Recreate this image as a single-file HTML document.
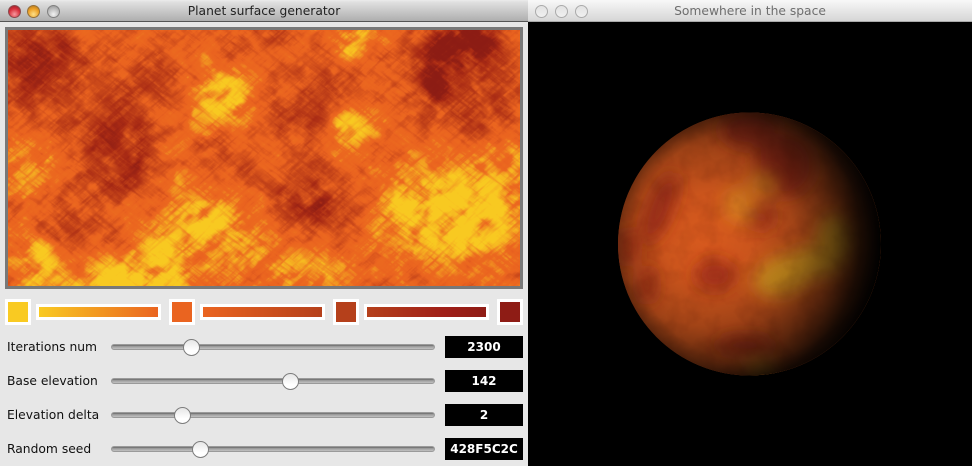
<!DOCTYPE html>
<html><head><meta charset="utf-8">
<style>
html,body{margin:0;padding:0;background:#000;width:972px;height:466px;overflow:hidden}
#root{position:relative;width:972px;height:466px;overflow:hidden;font-family:"DejaVu Sans","Liberation Sans",sans-serif}
#root div{position:absolute;box-sizing:border-box}
svg{display:block}
.tb{top:0;height:22px;text-align:center;font-size:12.3px;line-height:22px}
.l{left:0;width:528px;background:linear-gradient(#ececec,#e0e0e0 10%,#aeaeae);border-bottom:1px solid #555;color:#222}
.r{left:528px;width:444px;background:linear-gradient(#f8f8f8,#d6d6d6);border-bottom:1px solid #aaa;color:#6e6e6e}
.dot{width:13px;height:13px;border-radius:50%;top:5px}
.o{border:1px solid #aaa;background:linear-gradient(#e2e2e2,#f0f0f0)}
.sw{width:26px;height:26px;top:299px;border:3px solid #fff}
.bar{width:125px;height:16px;top:304px;border:3px solid #fff}
.lb{left:7px;font-size:12.3px;line-height:16px;color:#111;white-space:nowrap}
.tr{left:111px;width:324px;height:6px;border-radius:3px;background:linear-gradient(#666,#a0a0a0 40%,#c0c0c0);border:1px solid #9a9a9a}
.th{width:17px;height:17px;border-radius:50%;background:linear-gradient(#e6e6e6,#fff 70%);border:1.5px solid #7c7c7c}
.v{left:445px;width:78px;height:22px;background:#000;color:#fff;text-align:center;font-size:12px;font-weight:bold;line-height:22px}
</style></head><body>
<div id="root">
<div style="left:0;top:0;width:528px;height:466px;background:#e7e7e7"></div>
<div style="left:528px;top:0;width:444px;height:466px;background:#000"></div>
<div class="tb l">Planet surface generator</div>
<div class="tb r">Somewhere in the space</div>
<div class="dot" style="left:7.5px;background:radial-gradient(circle at 50% 75%,#f79aa0,#d8303c 55%,#8f1c24);border:1px solid #8a4a4e"></div>
<div class="dot" style="left:26.5px;background:radial-gradient(circle at 50% 75%,#fde08a,#eda126 55%,#a8701c);border:1px solid #94703a"></div>
<div class="dot" style="left:46.5px;background:radial-gradient(circle at 50% 75%,#f2f2f2,#b8b8b8 60%,#8c8c8c);border:1px solid #808080"></div>
<div class="dot o" style="left:535px"></div>
<div class="dot o" style="left:555px"></div>
<div class="dot o" style="left:575px"></div>

<div style="left:5px;top:27px;width:518px;height:262px;background:#787878"></div>
<svg style="position:absolute;left:8px;top:30px" width="512" height="256" viewBox="8 30 512 256">
<defs>
<filter id="pal" x="0" y="0" width="100%" height="100%" color-interpolation-filters="sRGB">
<feComponentTransfer>
<feFuncR type="table" tableValues=".55 .56 .66 .74 .835 .92 .925 .945 .965 .976 .976"/>
<feFuncG type="table" tableValues=".11 .118 .165 .24 .32 .39 .415 .565 .714 .79 .79"/>
<feFuncB type="table" tableValues=".08 .08 .08 .094 .11 .125 .125 .13 .133 .133 .133"/>
</feComponentTransfer>
</filter>
<filter id="b7" x="-20%" y="-20%" width="140%" height="140%" color-interpolation-filters="sRGB"><feGaussianBlur stdDeviation="6"/></filter>
<filter id="b16" x="-20%" y="-20%" width="140%" height="140%" color-interpolation-filters="sRGB"><feGaussianBlur stdDeviation="15"/></filter>
<filter id="nw" x="0" y="0" width="100%" height="100%" color-interpolation-filters="sRGB">
<feTurbulence type="fractalNoise" baseFrequency=".03 .28" numOctaves="3" seed="4"/>
<feColorMatrix values="0 0 0 0 1 0 0 0 0 1 0 0 0 0 1 2.6 0 0 0 -1.15"/>
</filter>
<filter id="nb" x="0" y="0" width="100%" height="100%" color-interpolation-filters="sRGB">
<feTurbulence type="fractalNoise" baseFrequency=".03 .28" numOctaves="3" seed="9"/>
<feColorMatrix values="0 0 0 0 0 0 0 0 0 0 0 0 0 0 0 2.6 0 0 0 -1.15"/>
</filter>
<filter id="cw" x="0" y="0" width="100%" height="100%" color-interpolation-filters="sRGB">
<feTurbulence type="fractalNoise" baseFrequency=".035 .06" numOctaves="3" seed="21"/>
<feColorMatrix values="0 0 0 0 1 0 0 0 0 1 0 0 0 0 1 3 0 0 0 -1.35"/>
</filter>
<filter id="cb" x="0" y="0" width="100%" height="100%" color-interpolation-filters="sRGB">
<feTurbulence type="fractalNoise" baseFrequency=".035 .06" numOctaves="3" seed="33"/>
<feColorMatrix values="0 0 0 0 0 0 0 0 0 0 0 0 0 0 0 3 0 0 0 -1.35"/>
</filter>
<filter id="pn" x="0" y="0" width="100%" height="100%" color-interpolation-filters="sRGB">
<feTurbulence type="fractalNoise" baseFrequency=".05" numOctaves="3" seed="12"/>
<feColorMatrix values="0 0 0 0 .35 0 0 0 0 .08 0 0 0 0 .03 1.8 0 0 0 -.75"/>
</filter>
<filter id="b5" x="-40%" y="-40%" width="180%" height="180%"><feGaussianBlur stdDeviation="8"/></filter>
</defs>
<g filter="url(#pal)">
<rect x="8" y="30" width="512" height="256" fill="#858585"/>
<g filter="url(#b16)">
<g fill="#c8c8c8">
<ellipse cx="224" cy="97" rx="42" ry="34"/>
<ellipse cx="205" cy="235" rx="70" ry="42"/>
<ellipse cx="100" cy="275" rx="70" ry="28"/>
<ellipse cx="450" cy="215" rx="85" ry="58"/>
<ellipse cx="350" cy="127" rx="32" ry="28"/>
<ellipse cx="25" cy="170" rx="28" ry="34"/>
<ellipse cx="177" cy="160" rx="28" ry="28"/>
<ellipse cx="300" cy="268" rx="60" ry="26"/>
<ellipse cx="510" cy="165" rx="28" ry="35"/>
<ellipse cx="35" cy="255" rx="32" ry="32"/>
<ellipse cx="360" cy="50" rx="30" ry="20"/>
</g>
<g fill="#4a4a4a">
<ellipse cx="40" cy="70" rx="55" ry="55"/>
<ellipse cx="120" cy="150" rx="46" ry="56"/>
<ellipse cx="150" cy="85" rx="36" ry="30"/>
<ellipse cx="310" cy="205" rx="50" ry="36"/>
<ellipse cx="460" cy="70" rx="65" ry="46"/>
<ellipse cx="300" cy="110" rx="36" ry="36"/>
<ellipse cx="345" cy="80" rx="28" ry="26"/>
<ellipse cx="70" cy="232" rx="40" ry="26"/>
<ellipse cx="215" cy="160" rx="26" ry="20"/>
<ellipse cx="490" cy="110" rx="36" ry="28"/>
<ellipse cx="245" cy="38" rx="36" ry="12"/>
</g>
</g>
<g filter="url(#b7)">
<g fill="#fff">
<ellipse cx="224" cy="97" rx="22" ry="20" transform="rotate(-40 224 97)"/>
<ellipse cx="205" cy="220" rx="24" ry="18"/>
<polygon points="63,300 97,268 178,232 186,300"/>
<ellipse cx="40" cy="253" rx="12" ry="15"/>
<ellipse cx="42" cy="275" rx="28" ry="7" transform="rotate(-22 42 275)"/>
<ellipse cx="460" cy="213" rx="50" ry="40"/>
<ellipse cx="412" cy="202" rx="22" ry="18"/>
<ellipse cx="350" cy="127" rx="16" ry="13"/>
<ellipse cx="357" cy="45" rx="20" ry="10" transform="rotate(-40 357 45)"/>
</g>
<g fill="#000">
<ellipse cx="462" cy="46" rx="40" ry="24" transform="rotate(-25 462 46)"/>
<ellipse cx="436" cy="82" rx="12" ry="28"/>
</g>
<g fill="#262626">
<ellipse cx="33" cy="62" rx="24" ry="26"/>
<ellipse cx="58" cy="50" rx="16" ry="16"/>
<ellipse cx="107" cy="140" rx="16" ry="20"/>
<ellipse cx="137" cy="160" rx="14" ry="12"/>
<ellipse cx="117" cy="182" rx="14" ry="10"/>
<ellipse cx="313" cy="202" rx="22" ry="18"/>
</g>
</g>
<g opacity=".3">
<g transform="rotate(40 264 158)"><rect x="-100" y="-200" width="730" height="720" filter="url(#cw)"/></g>
<g transform="rotate(-40 264 158)"><rect x="-100" y="-200" width="730" height="720" filter="url(#cb)"/></g>
</g>
<g opacity=".16">
<g transform="rotate(38 264 158)"><rect x="-100" y="-200" width="730" height="720" filter="url(#nw)"/></g>
<g transform="rotate(-42 264 158)"><rect x="-100" y="-200" width="730" height="720" filter="url(#nw)"/></g>
<g transform="rotate(38 264 158)"><rect x="-100" y="-200" width="730" height="720" filter="url(#nb)"/></g>
<g transform="rotate(-42 264 158)"><rect x="-100" y="-200" width="730" height="720" filter="url(#nb)"/></g>
</g>
</g>
</svg>

<div class="sw" style="left:5px;background:#f9ca22"></div>
<div class="bar" style="left:36px;background:linear-gradient(90deg,#f9ca22,#ea6420)"></div>
<div class="sw" style="left:169px;background:#ea6420"></div>
<div class="bar" style="left:200px;background:linear-gradient(90deg,#ea6420,#b5401b)"></div>
<div class="sw" style="left:333px;background:#b5401b"></div>
<div class="bar" style="left:364px;background:linear-gradient(90deg,#b5401b,#a01f18 65%,#8e1c15)"></div>
<div class="sw" style="left:497px;background:#8e1c15"></div>

<div class="lb" style="top:339px">Iterations num</div>
<div class="lb" style="top:373px">Base elevation</div>
<div class="lb" style="top:407px">Elevation delta</div>
<div class="lb" style="top:441px">Random seed</div>

<div class="tr" style="top:344px"></div>
<div class="tr" style="top:378px"></div>
<div class="tr" style="top:412px"></div>
<div class="tr" style="top:446px"></div>
<div class="th" style="left:183px;top:339px"></div>
<div class="th" style="left:282px;top:373px"></div>
<div class="th" style="left:174px;top:407px"></div>
<div class="th" style="left:192px;top:441px"></div>

<div class="v" style="top:336px">2300</div>
<div class="v" style="top:370px">142</div>
<div class="v" style="top:404px">2</div>
<div class="v" style="top:438px">428F5C2C</div>

<svg style="position:absolute;left:528px;top:22px" width="444" height="444" viewBox="528 22 444 444">
<defs>
<clipPath id="pc"><circle cx="749.5" cy="244" r="131.5"/></clipPath>
<radialGradient id="shade" gradientUnits="userSpaceOnUse" cx="706" cy="238" r="176">
<stop offset="0" stop-color="#000" stop-opacity="0"/>
<stop offset=".25" stop-color="#000" stop-opacity=".06"/>
<stop offset=".5" stop-color="#000" stop-opacity=".25"/>
<stop offset=".72" stop-color="#000" stop-opacity=".58"/>
<stop offset=".88" stop-color="#000" stop-opacity=".88"/>
<stop offset="1" stop-color="#000" stop-opacity="1"/>
</radialGradient>
<radialGradient id="rim" gradientUnits="userSpaceOnUse" cx="749.5" cy="244" r="131.5">
<stop offset=".88" stop-color="#000" stop-opacity="0"/>
<stop offset="1" stop-color="#000" stop-opacity=".25"/>
</radialGradient>
</defs>
<g clip-path="url(#pc)">
<rect x="610" y="105" width="280" height="280" fill="#d85a1e"/>
<g filter="url(#b5)">
<g fill="#a02a18" opacity=".85">
<ellipse cx="660" cy="208" rx="13" ry="38" transform="rotate(22 660 208)"/>
<ellipse cx="628" cy="247" rx="9" ry="20"/>
<ellipse cx="715" cy="275" rx="20" ry="16"/>
<ellipse cx="647" cy="285" rx="9" ry="20"/>
<ellipse cx="750" cy="130" rx="30" ry="18"/>
<ellipse cx="785" cy="165" rx="30" ry="32"/>
<ellipse cx="762" cy="218" rx="12" ry="12"/>
<ellipse cx="745" cy="345" rx="30" ry="10"/>
</g>
<g fill="#e8a420" opacity=".55">
<ellipse cx="738" cy="205" rx="14" ry="18"/>
<ellipse cx="762" cy="185" rx="14" ry="10"/>
</g>
<g fill="#e8b020" opacity=".8">
<ellipse cx="785" cy="275" rx="32" ry="20" transform="rotate(-20 785 275)"/>
<ellipse cx="835" cy="240" rx="18" ry="26"/>
<ellipse cx="815" cy="262" rx="28" ry="16"/>
<ellipse cx="762" cy="372" rx="16" ry="8"/>
</g>
</g>
<rect x="610" y="105" width="280" height="280" filter="url(#pn)" opacity=".18"/>
<rect x="610" y="105" width="280" height="280" fill="url(#shade)"/>
<rect x="610" y="105" width="280" height="280" fill="url(#rim)"/>
</g>
</svg>
</div>
</body></html>
